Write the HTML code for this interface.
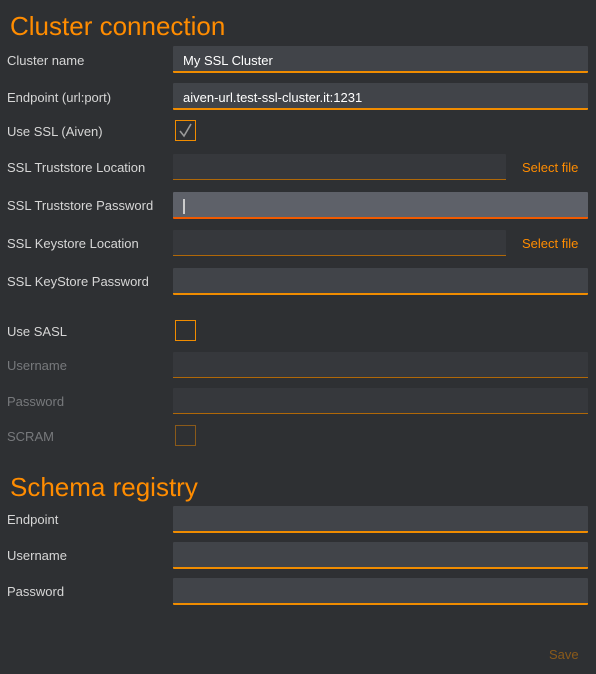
<!DOCTYPE html>
<html><head><style>
body{margin:0;width:596px;height:674px;background:#2e3033;font-family:"Liberation Sans",Arial,sans-serif;position:relative;overflow:hidden}
.a{position:absolute}
h1{position:absolute;margin:0;font-weight:normal;color:#ff8c00;font-size:26px;left:10px}
.l{position:absolute;left:7px;font-size:13px;color:#d6d6d6}
.d{color:#77797c}
.f{position:absolute;left:173px;width:415px;background:#414449;border-bottom:2px solid #f08c00;border-radius:1px;color:#fff;font-size:13px;line-height:29px;padding-left:10px;box-sizing:border-box;height:27px}
.f2{background:#36383c;height:26px;border-bottom:none !important}
.f2::after{content:"";position:absolute;left:0;right:0;bottom:0;height:1px;background:#b06808}
.cb{position:absolute;left:175px;width:19px;height:19px;border:1px solid #f08c00}
.s{position:absolute;left:522px;color:#ff8c00;font-size:13px}
</style></head><body>
<h1 style="top:11px">Cluster connection</h1>
<div class="l" style="top:53px">Cluster name</div><div class="f" style="top:46px">My SSL Cluster</div>
<div class="l" style="top:90px">Endpoint (url:port)</div><div class="f" style="top:83px">aiven-url.test-ssl-cluster.it:1231</div>
<div class="l" style="top:124px">Use SSL (Aiven)</div><div class="cb" style="top:120px"><svg width="19" height="19"><path d="M4 10 L8 15 L15 3" stroke="#9a9a9a" stroke-width="1.6" fill="none"/></svg></div>
<div class="l" style="top:160px">SSL Truststore Location</div><div class="f f2" style="top:154px;width:333px"></div><div class="s" style="top:160px">Select file</div>
<div class="l" style="top:198px">SSL Truststore Password</div><div class="f" style="top:192px;background:#5e6169;border-bottom-color:#f05a00;line-height:27px"><span style="display:inline-block;width:2px;height:15px;background:#ccc;vertical-align:middle"></span></div>
<div class="l" style="top:236px">SSL Keystore Location</div><div class="f f2" style="top:230px;width:333px"></div><div class="s" style="top:236px">Select file</div>
<div class="l" style="top:274px">SSL KeyStore Password</div><div class="f" style="top:268px"></div>
<div class="l" style="top:324px">Use SASL</div><div class="cb" style="top:320px"></div>
<div class="l d" style="top:358px">Username</div><div class="f f2" style="top:352px"></div>
<div class="l d" style="top:394px">Password</div><div class="f f2" style="top:388px"></div>
<div class="l d" style="top:429px">SCRAM</div><div class="cb" style="top:425px;border-color:#8a5a1a"></div>
<h1 style="top:472px">Schema registry</h1>
<div class="l" style="top:512px">Endpoint</div><div class="f" style="top:506px"></div>
<div class="l" style="top:548px">Username</div><div class="f" style="top:542px"></div>
<div class="l" style="top:584px">Password</div><div class="f" style="top:578px"></div>
<div class="a" style="left:549px;top:647px;font-size:13px;color:#8a5a1a">Save</div>
</body></html>
